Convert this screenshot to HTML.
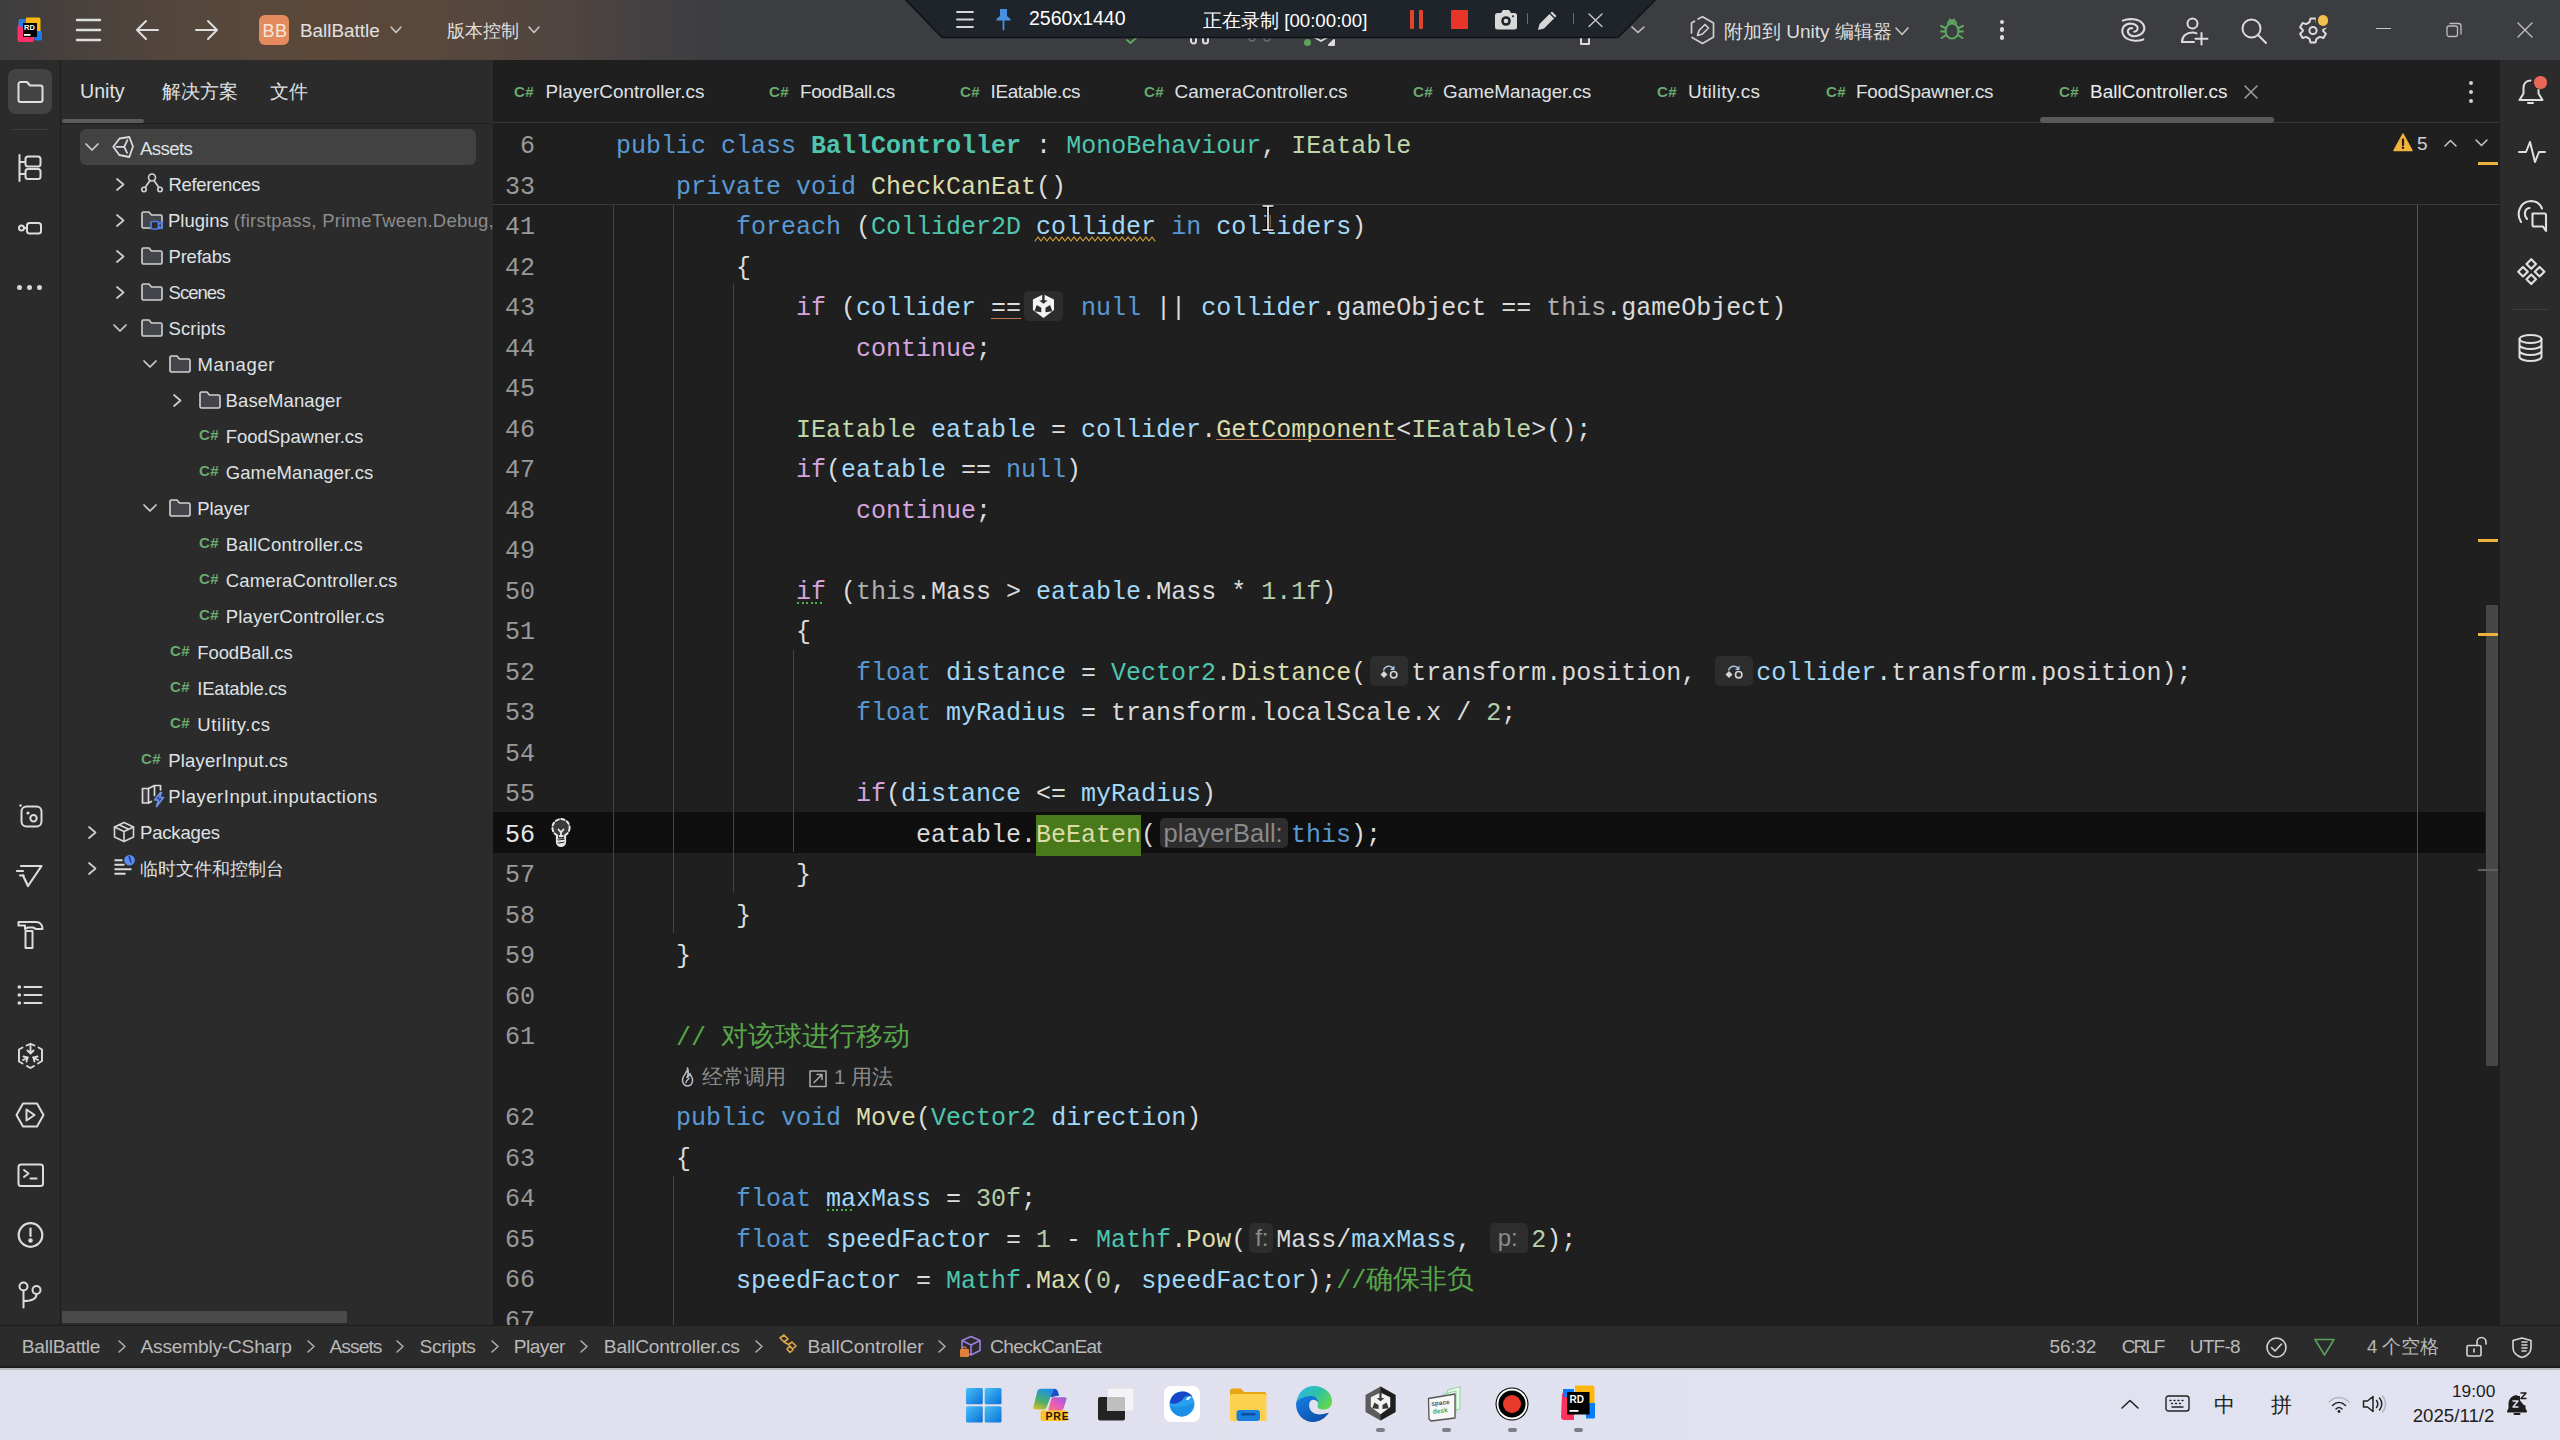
<!DOCTYPE html><html><head><meta charset="utf-8"><style>
*{box-sizing:border-box}
html,body{margin:0;padding:0}
body{width:2560px;height:1440px;overflow:hidden;position:relative;background:#1f1f1f;font-family:"Liberation Sans",sans-serif;color:#dfe1e5}
.a{position:absolute}
svg.i{position:absolute;overflow:visible;fill:none;stroke:#dcdcdc;stroke-width:2;stroke-linecap:round;stroke-linejoin:round}
.t{position:absolute;white-space:nowrap;line-height:1}
.code{position:absolute;font-family:"Liberation Mono",monospace;font-size:25px;white-space:pre;line-height:40.5px;color:#dcdcdc}
.kw{color:#5999d3}.ct{color:#d6a4dd}.ty{color:#4ec6ae}.it{color:#bed6aa}.fn{color:#dcdcaa}
.id{color:#a2d8f8}.nm{color:#b5cea8}.cm{color:#57a64a}.th{color:#b0b0b0}.mb{color:#dadada}
.ln{position:absolute;font-family:"Liberation Mono",monospace;font-size:25px;line-height:40.5px;color:#999999;text-align:right;width:80px;white-space:pre}
.cs{position:absolute;font-family:"Liberation Sans",sans-serif;font-weight:bold;font-size:14.8px;line-height:1;color:#6aa970;white-space:nowrap;transform:scaleX(1.02);transform-origin:0 0;letter-spacing:0.3px}
.chip{display:inline-block;position:relative;vertical-align:top;height:40.5px}
.chip i{position:absolute;top:2px;height:30px;background:#2d2d2d;border-radius:5px;font-style:normal;font-family:"Liberation Sans",sans-serif;color:#8a8a8a;white-space:nowrap}
</style></head><body>
<div class="a" style="left:0px;top:0px;width:2560px;height:60px;background:#3c3d40;"></div>
<div class="a" style="left:0px;top:0px;width:800px;height:60px;background:linear-gradient(90deg,#3e3d3e 0px,#4a423e 90px,#56473c 200px,#5b4839 320px,#58473b 440px,#504541 560px,#464141 630px,#3d3e41 710px,#3c3d40 800px);"></div>
<svg class="i" style="left:12px;top:12px;width:36px;height:36px;stroke:none" viewBox="0 0 36 36"><rect x="5.5" y="12.5" width="16.5" height="17.5" rx="2.5" fill="#ff2f6c"/><rect x="6.5" y="7" width="8" height="8" rx="2" fill="#3279dc"/><path d="M14 5.5H26.5Q28.5 5.5 28.5 7.5V20H14Z" fill="#fdb60d"/><rect x="22.5" y="19" width="7.5" height="9.5" rx="1.5" fill="#1a78f0"/><rect x="11" y="11" width="14" height="14" fill="#000"/><text x="12.1" y="18.3" font-family="Liberation Sans" font-weight="bold" font-size="7.4" fill="#fff" stroke="none">RD</text><rect x="12" y="22" width="6.5" height="1.8" fill="#fff"/></svg>
<svg class="i" style="left:76px;top:18px;width:25px;height:24px;stroke:#dedede;stroke-width:2.4" viewBox="0 0 25 24"><path d="M1 2H24M1 12H24M1 22H24"/></svg>
<svg class="i" style="left:135px;top:19px;width:24px;height:22px;stroke:#dedede" viewBox="0 0 24 22"><path d="M23 11H2M11 2L2 11L11 20"/></svg>
<svg class="i" style="left:195px;top:19px;width:24px;height:22px;stroke:#dedede" viewBox="0 0 24 22"><path d="M1 11H22M13 2L22 11L13 20"/></svg>
<div class="a" style="left:259px;top:15px;width:30px;height:30px;background:#e38b5d;border-radius:6px"></div>
<div class="t" style="left:262.5px;top:21.96px;font-size:18px;color:#f7e6da;letter-spacing:0.5px">BB</div>
<div class="t" style="left:300px;top:21.50px;font-size:18.9px;color:#e0e0e0;letter-spacing:-0.017px;">BallBattle</div>
<svg class="i" style="left:390px;top:26px;width:12px;height:8px;stroke:#c8c8c8;stroke-width:1.6" viewBox="0 0 12 8"><path d="M1 1L6 6.5L11 1"/></svg>
<div class="t" style="left:447px;top:22.26px;font-size:18px;color:#e0e0e0;">版本控制</div>
<svg class="i" style="left:528px;top:26px;width:12px;height:8px;stroke:#c8c8c8;stroke-width:1.6" viewBox="0 0 12 8"><path d="M1 1L6 6.5L11 1"/></svg>
<svg class="i" style="left:1689px;top:16px;width:27px;height:30px;stroke:#cfcfcf;stroke-width:1.7" viewBox="0 0 27 30"><path d="M9 3L13.5 0.8L24.5 7V21L13.5 27.5L3 21.5M2.5 17V7L5.5 5.2"/><path d="M8.5 19.5L10 14.5L16 8.5L19.5 12L13.5 18L8.5 19.5Z"/></svg>
<div class="t" style="left:1724px;top:22.22px;font-size:19px;color:#dedede;">附加到 Unity 编辑器</div>
<svg class="i" style="left:1895px;top:27px;width:14px;height:9px;stroke:#c8c8c8;stroke-width:1.6" viewBox="0 0 14 9"><path d="M1 1L7 7.5L13 1"/></svg>
<svg class="i" style="left:1940px;top:18px;width:24px;height:22px;stroke:#5faa5f;stroke-width:2" viewBox="0 0 24 22"><path d="M8 5.5a4 3 0 0 1 8 0"/><path d="M10 1.5L11 4M14 1.5L13 4"/><ellipse cx="12" cy="13" rx="6.5" ry="7.5"/><path d="M1 8L5.5 10M23 8L18.5 10M1 13.5H5.5M23 13.5H18.5M1.5 20L5.5 17.5M22.5 20L18.5 17.5"/></svg>
<div class="a" style="left:1999.6px;top:19.5px;width:4.8px;height:4.8px;background:#dcdcdc;border-radius:50%"></div>
<div class="a" style="left:1999.6px;top:27.3px;width:4.8px;height:4.8px;background:#dcdcdc;border-radius:50%"></div>
<div class="a" style="left:1999.6px;top:35.1px;width:4.8px;height:4.8px;background:#dcdcdc;border-radius:50%"></div>
<svg class="i" style="left:2110px;top:10px;width:50px;height:40px;stroke:#dcdcdc;stroke-width:2.1" viewBox="0 0 50 40"><path d="M12.8 10.6C18 8.5 29 8 33 14C36 19 33.5 24 27.5 25.8C22.5 27.2 18 25 17.8 21.5C17.6 19 20 17.8 22.2 18.3"/><path d="M33.3 29.4C28 31.5 18 31.5 14 26C11 22 12 17 15.5 15C19 13 25 13 27.2 16.5C28.5 19 27 21.5 24.2 21.7"/></svg>
<svg class="i" style="left:2181px;top:17px;width:28px;height:28px;stroke:#dcdcdc;stroke-width:2" viewBox="0 0 28 28"><circle cx="11.5" cy="6.5" r="5"/><path d="M1 25C1 19 5.5 15.5 11.5 15.5C13 15.5 14.3 15.8 15.5 16.3"/><path d="M1 25H13M20.5 16V27.5M14.5 21.8H26.5"/></svg>
<svg class="i" style="left:2241px;top:18px;width:26px;height:26px;stroke:#dcdcdc;stroke-width:2" viewBox="0 0 26 26"><circle cx="10.5" cy="10.5" r="9"/><path d="M17 17L25 25"/></svg>
<svg class="i" style="left:2300px;top:16px;width:26px;height:28px;stroke:none" viewBox="0 0 26 28"><path d="M10 2.5L16 2.5L17 6L20.5 8L24 7L27 12.5L24.5 15L24.5 17.5L24 15M13 2.5"/></svg>
<svg class="i" style="left:2300px;top:17px;width:26px;height:27px;stroke:#dcdcdc;stroke-width:2" viewBox="0 0 26 27"><path d="M10.5 1.5H15.5L16.5 5.2L19.8 7.1L23.4 6L25.9 10.3L23.2 13V14.1L25.9 16.7L23.4 21L19.8 19.9L16.5 21.8L15.5 25.5H10.5L9.5 21.8L6.2 19.9L2.6 21L0.1 16.7L2.8 14.1V13L0.1 10.3L2.6 6L6.2 7.1L9.5 5.2Z"/><circle cx="13" cy="13.5" r="3.6"/></svg>
<div class="a" style="left:2317.5px;top:14.8px;width:10.8px;height:10.8px;background:#f2c14e;border-radius:50%;box-shadow:0 0 0 2.5px #3c3d40"></div>
<div class="a" style="left:2376px;top:28.2px;width:15px;height:1.2px;background:#c4c4c4;"></div>
<svg class="i" style="left:2446px;top:22px;width:16px;height:15px;stroke:#bdbdbd;stroke-width:1.3" viewBox="0 0 16 15"><rect x="1" y="4" width="10.5" height="10.5" rx="2"/><path d="M4 1.5H12.5A2.5 2.5 0 0 1 15 4V12"/></svg>
<svg class="i" style="left:2517px;top:22px;width:16px;height:15px;stroke:#bdbdbd;stroke-width:1.4" viewBox="0 0 16 15"><path d="M1 1L15 15M15 1L1 15"/></svg>
<svg class="i" style="left:1126px;top:36px;width:12px;height:8px;stroke:#5faa5f;stroke-width:1.8" viewBox="0 0 12 8"><path d="M1 4L4.5 7L11 1"/></svg>
<svg class="i" style="left:1189px;top:36px;width:22px;height:8px;stroke:#dcdcdc;stroke-width:2" viewBox="0 0 22 8"><path d="M2 1V5A2 2 0 0 0 7 5V1M14 1V5A2 2 0 0 0 19 5V1"/></svg>
<svg class="i" style="left:1248px;top:36px;width:24px;height:8px;stroke:#6a6a6a;stroke-width:1.5" viewBox="0 0 24 8"><path d="M1 2A3 3 0 0 0 7 2M16 2A3 3 0 0 0 22 2"/></svg>
<div class="a" style="left:1304px;top:39px;width:7px;height:7px;background:#5fa35f;border-radius:50%"></div>
<svg class="i" style="left:1313px;top:36px;width:22px;height:10px;stroke:#dcdcdc;stroke-width:2" viewBox="0 0 22 10"><path d="M1 1L8 5L15 1"/><path d="M16 9L21 4V9Z" fill="#dcdcdc"/></svg>
<svg class="i" style="left:1580px;top:37px;width:10px;height:9px;stroke:#dcdcdc;stroke-width:2" viewBox="0 0 10 9"><path d="M1 0V7H9V0"/></svg>
<svg class="i" style="left:1631px;top:26px;width:14px;height:8px;stroke:#c8c8c8;stroke-width:1.6" viewBox="0 0 14 8"><path d="M1 1L7 6.5L13 1"/></svg>
<svg class="i" style="left:904px;top:-1px;width:753px;height:40px;stroke:none" viewBox="0 0 753 40"><path d="M1 0H752L714 38.5H38Z" fill="#1f242b" stroke="#0f1216" stroke-width="1.5"/></svg>
<svg class="i" style="left:956px;top:11px;width:18px;height:17px;stroke:#d6d6d6;stroke-width:1.8" viewBox="0 0 18 17"><path d="M1 1H17M1 8.5H17M1 16H17"/></svg>
<svg class="i" style="left:995px;top:8px;width:18px;height:22px;stroke:none" viewBox="0 0 18 22"><path d="M5 1H12V8L15.5 11V12.5H1.5V11L5 8Z" fill="#4a90e2" stroke="none"/><path d="M8.5 12.5V21.5" stroke="#4a90e2" stroke-width="1.8"/></svg>
<div class="t" style="left:1029px;top:8.69px;font-size:19.5px;color:#ffffff;">2560x1440</div>
<div class="t" style="left:1203px;top:11.67px;font-size:18.7px;color:#ffffff;">正在录制 [00:00:00]</div>
<div class="a" style="left:1409.5px;top:10.2px;width:4.6px;height:18.7px;background:#e0442e;border-radius:1px"></div>
<div class="a" style="left:1418.8px;top:10.2px;width:4.6px;height:18.7px;background:#e0442e;border-radius:1px"></div>
<div class="a" style="left:1451px;top:10px;width:17.3px;height:19px;background:#e8352a;border-radius:1px"></div>
<svg class="i" style="left:1494px;top:9px;width:24px;height:21px;stroke:none" viewBox="0 0 24 21"><path d="M1 6.5A2.5 2.5 0 0 1 3.5 4H7L9 1H15L17 4H20.5A2.5 2.5 0 0 1 23 6.5V18A2.5 2.5 0 0 1 20.5 20.5H3.5A2.5 2.5 0 0 1 1 18Z" fill="#d8d8d8" stroke="none"/><circle cx="12" cy="12" r="4.8" fill="#1f242b"/><circle cx="12" cy="12" r="2.3" fill="#d8d8d8"/><circle cx="19" cy="7.3" r="1" fill="#1f242b"/></svg>
<div class="a" style="left:1526.5px;top:13px;width:1.3px;height:11px;background:#6a6d72;"></div>
<svg class="i" style="left:1537px;top:9px;width:22px;height:22px;stroke:none" viewBox="0 0 22 22"><path d="M2.5 15L15 2.5L19.5 7L7 19.5L1 21Z" fill="#d8d8d8" stroke="none"/><path d="M13 4.5L17.5 9" stroke="#1f242b" stroke-width="1.3"/></svg>
<div class="a" style="left:1573px;top:13px;width:1.3px;height:11px;background:#6a6d72;"></div>
<svg class="i" style="left:1587.5px;top:12.5px;width:15px;height:14.5px;stroke:#c6c6c6;stroke-width:1.4" viewBox="0 0 15 14.5"><path d="M1 1L14 13.5M14 1L1 13.5"/></svg>
<div class="a" style="left:0px;top:60px;width:60px;height:1265px;background:#2b2b2b;"></div>
<div class="a" style="left:60px;top:60px;width:1px;height:1265px;background:#1e1e1e;"></div>
<div class="a" style="left:7.6px;top:69px;width:44.7px;height:44.8px;background:#434343;border-radius:8px"></div>
<svg class="i" style="left:16.5px;top:81px;width:27px;height:22px;stroke:#e0e0e0;stroke-width:2" viewBox="0 0 27 22"><path d="M1.5 3A2 2 0 0 1 3.5 1H10L13 4.5H23.5A2 2 0 0 1 25.5 6.5V19A2 2 0 0 1 23.5 21H3.5A2 2 0 0 1 1.5 19Z"/></svg>
<div class="a" style="left:12px;top:129px;width:36px;height:1px;background:#3d3d3d;"></div>
<svg class="i" style="left:18px;top:154px;width:24px;height:28px;stroke:#dcdcdc;stroke-width:2" viewBox="0 0 24 28"><path d="M1.5 1V27M1.5 8H6.5M1.5 20H6.5"/><rect x="7.5" y="2.5" width="15" height="10" rx="2.5"/><rect x="7.5" y="15" width="15" height="10" rx="2.5"/></svg>
<svg class="i" style="left:18px;top:222px;width:24px;height:12px;stroke:#dcdcdc;stroke-width:2" viewBox="0 0 24 12"><circle cx="3.5" cy="6" r="2.5"/><path d="M6 6H9"/><rect x="9" y="1" width="14" height="10.5" rx="2.5"/></svg>
<div class="a" style="left:17.4px;top:285.3px;width:5px;height:5px;background:#d6d6d6;border-radius:50%"></div>
<div class="a" style="left:27.3px;top:285.3px;width:5px;height:5px;background:#d6d6d6;border-radius:50%"></div>
<div class="a" style="left:37.2px;top:285.3px;width:5px;height:5px;background:#d6d6d6;border-radius:50%"></div>
<svg class="i" style="left:19px;top:804px;width:24px;height:24px;stroke:#dcdcdc;stroke-width:2" viewBox="0 0 24 24"><circle cx="1.5" cy="1.5" r="1.2" fill="#dcdcdc" stroke="none"/><rect x="2.5" y="2.5" width="20" height="20" rx="5"/><circle cx="9" cy="9" r="1.6" fill="#dcdcdc" stroke="none"/><circle cx="14.5" cy="14.2" r="3.2"/></svg>
<svg class="i" style="left:15px;top:864px;width:29px;height:24px;stroke:#dcdcdc;stroke-width:2.2" viewBox="0 0 29 24"><path d="M6 2H26.5L13 22L8 11.5"/><path d="M2 7H8M5 11.5H8.5"/></svg>
<svg class="i" style="left:17px;top:920px;width:27px;height:30px;stroke:#dcdcdc;stroke-width:2" viewBox="0 0 27 30"><path d="M1.5 2H19C23 2 25.5 5 25.5 9H19L16 7.5H11L8 9V5.5H1.5Z"/><path d="M8.5 11H15.5V28H8.5Z"/></svg>
<svg class="i" style="left:17px;top:984px;width:26px;height:22px;stroke:#dcdcdc;stroke-width:2" viewBox="0 0 26 22"><circle cx="2.3" cy="3" r="1.8" fill="#dcdcdc" stroke="none"/><circle cx="2.3" cy="11" r="1.8" fill="#dcdcdc" stroke="none"/><circle cx="2.3" cy="19" r="1.8" fill="#dcdcdc" stroke="none"/><path d="M7.5 3H24.5M7.5 11H24.5M7.5 19H24.5"/></svg>
<svg class="i" style="left:18px;top:1043px;width:25px;height:26px;stroke:#dcdcdc;stroke-width:1.9" viewBox="0 0 25 26"><path d="M8.5 2.5L12.5 0.8L16.5 2.5M20.5 4.5L24 6.5V18L20 20.5M16 23L12.5 25L9 23M4.5 20.5L1 18.5V6.5L4.5 4.5"/><path d="M12.5 3V10M9.5 7.5L12.5 10.5L15.5 7.5M5 17L10 14.5M5.5 13.5L9.5 14.5L8.5 18.5M20 17L15 14.5M19.5 13.5L15.5 14.5L16.5 18.5"/></svg>
<svg class="i" style="left:15px;top:1102px;width:30px;height:26px;stroke:#dcdcdc;stroke-width:2" viewBox="0 0 30 26"><path d="M8 1.5H22L28.5 13L22 24.5H8L1.5 13Z"/><path d="M11.5 7.5L19.5 13L11.5 18.5Z"/></svg>
<svg class="i" style="left:17px;top:1163px;width:27px;height:25px;stroke:#dcdcdc;stroke-width:2" viewBox="0 0 27 25"><rect x="1.5" y="1.5" width="24.5" height="21.5" rx="2.5"/><path d="M7 7L11.5 10.5L7 14M13.5 15.5H19.5"/></svg>
<svg class="i" style="left:17px;top:1221px;width:27px;height:28px;stroke:#dcdcdc;stroke-width:2.2" viewBox="0 0 27 28"><circle cx="13.5" cy="14" r="11.8"/><path d="M13.5 7.5V15"/><circle cx="13.5" cy="19.5" r="1.2" fill="#dcdcdc"/></svg>
<svg class="i" style="left:18px;top:1281px;width:25px;height:28px;stroke:#dcdcdc;stroke-width:2" viewBox="0 0 25 28"><circle cx="5.5" cy="5.5" r="4"/><circle cx="18.5" cy="9" r="4"/><path d="M5.5 9.5V26.5M5.5 20C12 20 18.5 19 18.5 13"/></svg>
<div class="a" style="left:61px;top:60px;width:432px;height:1265px;background:#2b2b2b;"></div>
<div class="a" style="left:493px;top:60px;width:1px;height:1265px;background:#1e1e1e;"></div>
<div class="t" style="left:80px;top:82.31px;font-size:19.6px;color:#dfe1e5;">Unity</div>
<div class="t" style="left:162px;top:83.34px;font-size:18.5px;color:#dfe1e5;">解决方案</div>
<div class="t" style="left:270px;top:83.34px;font-size:18.5px;color:#dfe1e5;">文件</div>
<div class="a" style="left:62px;top:118.7px;width:82px;height:4px;background:#5c5c5c;border-radius:2px"></div>
<div class="a" style="left:61px;top:122.5px;width:431px;height:1px;background:#1f1f1f;"></div>
<div class="a" style="left:79.8px;top:129.4px;width:396px;height:35.5px;background:#424242;border-radius:6px"></div>
<svg class="i" style="left:85px;top:142.5px;width:14px;height:9px;stroke:#cfcfcf;stroke-width:1.7" viewBox="0 0 14 9"><path d="M1 1L7 7L13 1"/></svg>
<svg class="i" style="left:105px;top:130px;width:35px;height:35px;stroke:#dadada;stroke-width:1.8" viewBox="0 0 35 35"><path d="M8.3 16.8L14.6 8.5L24.3 7L28 16.5L24.3 27L14.3 25Z" fill="#3a3c41"/><path d="M11.4 16.8H19.2L22.4 10.2M19.2 16.8L22.1 22.8"/></svg>
<div class="t" style="left:140px;top:139.57px;font-size:18.7px;color:#dfe1e5;letter-spacing:-0.624px;">Assets</div>
<svg class="i" style="left:115.5px;top:177.5px;width:9px;height:13px;stroke:#cfcfcf;stroke-width:1.7" viewBox="0 0 9 13"><path d="M1 1L7.5 6.5L1 12"/></svg>
<svg class="i" style="left:141px;top:173px;width:22px;height:20px;stroke:#d6d6d6;stroke-width:1.6" viewBox="0 0 22 20"><circle cx="11" cy="4.5" r="3.5"/><circle cx="3" cy="16.5" r="2.2"/><circle cx="19" cy="16.5" r="2.2"/><path d="M9 7.5L4.2 14.5M13 7.5L17.8 14.5"/></svg>
<div class="t" style="left:168.5px;top:175.74px;font-size:18.5px;color:#dfe1e5;letter-spacing:-0.323px;">References</div>
<svg class="i" style="left:115.5px;top:213.5px;width:9px;height:13px;stroke:#cfcfcf;stroke-width:1.7" viewBox="0 0 9 13"><path d="M1 1L7.5 6.5L1 12"/></svg>
<svg class="i" style="left:141px;top:210.5px;width:22px;height:18px;stroke:#d2d2d2;stroke-width:1.6" viewBox="0 0 22 18"><path d="M1 2.5A1.5 1.5 0 0 1 2.5 1H8L10.5 4H19.5A1.5 1.5 0 0 1 21 5.5V15.5A1.5 1.5 0 0 1 19.5 17H2.5A1.5 1.5 0 0 1 1 15.5Z" fill="#43454a"/></svg>
<svg class="i" style="left:150px;top:219px;width:13px;height:11px;stroke:#4f7fe6;stroke-width:1.7" viewBox="0 0 13 11"><rect x="1" y="2.5" width="7.5" height="7.5" rx="1.3" fill="#2b2b2b"/><path d="M8.5 4.5L12 3V9.5L8.5 8"/></svg>
<div class="t" style="left:168px;top:211.74px;font-size:18.5px;color:#dfe1e5;">Plugins <span style="color:#8c8c8c;letter-spacing:0.25px">(firstpass, PrimeTween.Debug,</span></div>
<svg class="i" style="left:115.5px;top:249.5px;width:9px;height:13px;stroke:#cfcfcf;stroke-width:1.7" viewBox="0 0 9 13"><path d="M1 1L7.5 6.5L1 12"/></svg>
<svg class="i" style="left:141px;top:247px;width:22px;height:18px;stroke:#d2d2d2;stroke-width:1.6" viewBox="0 0 22 18"><path d="M1 2.5A1.5 1.5 0 0 1 2.5 1H8L10.5 4H19.5A1.5 1.5 0 0 1 21 5.5V15.5A1.5 1.5 0 0 1 19.5 17H2.5A1.5 1.5 0 0 1 1 15.5Z" fill="#43454a"/></svg>
<div class="t" style="left:168.5px;top:247.74px;font-size:18.5px;color:#dfe1e5;letter-spacing:-0.209px;">Prefabs</div>
<svg class="i" style="left:115.5px;top:285.5px;width:9px;height:13px;stroke:#cfcfcf;stroke-width:1.7" viewBox="0 0 9 13"><path d="M1 1L7.5 6.5L1 12"/></svg>
<svg class="i" style="left:141px;top:283px;width:22px;height:18px;stroke:#d2d2d2;stroke-width:1.6" viewBox="0 0 22 18"><path d="M1 2.5A1.5 1.5 0 0 1 2.5 1H8L10.5 4H19.5A1.5 1.5 0 0 1 21 5.5V15.5A1.5 1.5 0 0 1 19.5 17H2.5A1.5 1.5 0 0 1 1 15.5Z" fill="#43454a"/></svg>
<div class="t" style="left:168.5px;top:283.74px;font-size:18.5px;color:#dfe1e5;letter-spacing:-0.959px;">Scenes</div>
<svg class="i" style="left:113px;top:323.5px;width:14px;height:9px;stroke:#cfcfcf;stroke-width:1.7" viewBox="0 0 14 9"><path d="M1 1L7 7L13 1"/></svg>
<svg class="i" style="left:141px;top:319px;width:22px;height:18px;stroke:#d2d2d2;stroke-width:1.6" viewBox="0 0 22 18"><path d="M1 2.5A1.5 1.5 0 0 1 2.5 1H8L10.5 4H19.5A1.5 1.5 0 0 1 21 5.5V15.5A1.5 1.5 0 0 1 19.5 17H2.5A1.5 1.5 0 0 1 1 15.5Z" fill="#43454a"/></svg>
<div class="t" style="left:168.5px;top:319.74px;font-size:18.5px;color:#dfe1e5;letter-spacing:0.061px;">Scripts</div>
<svg class="i" style="left:143px;top:359.5px;width:14px;height:9px;stroke:#cfcfcf;stroke-width:1.7" viewBox="0 0 14 9"><path d="M1 1L7 7L13 1"/></svg>
<svg class="i" style="left:169px;top:355px;width:22px;height:18px;stroke:#d2d2d2;stroke-width:1.6" viewBox="0 0 22 18"><path d="M1 2.5A1.5 1.5 0 0 1 2.5 1H8L10.5 4H19.5A1.5 1.5 0 0 1 21 5.5V15.5A1.5 1.5 0 0 1 19.5 17H2.5A1.5 1.5 0 0 1 1 15.5Z" fill="#43454a"/></svg>
<div class="t" style="left:197.5px;top:355.74px;font-size:18.5px;color:#dfe1e5;letter-spacing:0.663px;">Manager</div>
<svg class="i" style="left:172.5px;top:393.5px;width:9px;height:13px;stroke:#cfcfcf;stroke-width:1.7" viewBox="0 0 9 13"><path d="M1 1L7.5 6.5L1 12"/></svg>
<svg class="i" style="left:198.5px;top:391px;width:22px;height:18px;stroke:#d2d2d2;stroke-width:1.6" viewBox="0 0 22 18"><path d="M1 2.5A1.5 1.5 0 0 1 2.5 1H8L10.5 4H19.5A1.5 1.5 0 0 1 21 5.5V15.5A1.5 1.5 0 0 1 19.5 17H2.5A1.5 1.5 0 0 1 1 15.5Z" fill="#43454a"/></svg>
<div class="t" style="left:225.6px;top:391.74px;font-size:18.5px;color:#dfe1e5;letter-spacing:0.082px;">BaseManager</div>
<div class="cs" style="left:198.5px;top:428.20px">C#</div>
<div class="t" style="left:225.7px;top:427.74px;font-size:18.5px;color:#dfe1e5;letter-spacing:-0.016px;">FoodSpawner.cs</div>
<div class="cs" style="left:198.5px;top:464.20px">C#</div>
<div class="t" style="left:225.7px;top:463.74px;font-size:18.5px;color:#dfe1e5;letter-spacing:0.121px;">GameManager.cs</div>
<svg class="i" style="left:143px;top:503.5px;width:14px;height:9px;stroke:#cfcfcf;stroke-width:1.7" viewBox="0 0 14 9"><path d="M1 1L7 7L13 1"/></svg>
<svg class="i" style="left:169px;top:499px;width:22px;height:18px;stroke:#d2d2d2;stroke-width:1.6" viewBox="0 0 22 18"><path d="M1 2.5A1.5 1.5 0 0 1 2.5 1H8L10.5 4H19.5A1.5 1.5 0 0 1 21 5.5V15.5A1.5 1.5 0 0 1 19.5 17H2.5A1.5 1.5 0 0 1 1 15.5Z" fill="#43454a"/></svg>
<div class="t" style="left:197.3px;top:499.74px;font-size:18.5px;color:#dfe1e5;letter-spacing:-0.089px;">Player</div>
<div class="cs" style="left:198.5px;top:536.20px">C#</div>
<div class="t" style="left:225.7px;top:535.74px;font-size:18.5px;color:#dfe1e5;letter-spacing:0.209px;">BallController.cs</div>
<div class="cs" style="left:198.5px;top:572.20px">C#</div>
<div class="t" style="left:225.7px;top:571.74px;font-size:18.5px;color:#dfe1e5;letter-spacing:0.166px;">CameraController.cs</div>
<div class="cs" style="left:198.5px;top:608.20px">C#</div>
<div class="t" style="left:225.7px;top:607.74px;font-size:18.5px;color:#dfe1e5;letter-spacing:0.186px;">PlayerController.cs</div>
<div class="cs" style="left:169.5px;top:644.20px">C#</div>
<div class="t" style="left:197.3px;top:643.74px;font-size:18.5px;color:#dfe1e5;letter-spacing:-0.126px;">FoodBall.cs</div>
<div class="cs" style="left:169.5px;top:680.20px">C#</div>
<div class="t" style="left:197.3px;top:679.74px;font-size:18.5px;color:#dfe1e5;letter-spacing:-0.212px;">IEatable.cs</div>
<div class="cs" style="left:169.5px;top:716.20px">C#</div>
<div class="t" style="left:197.3px;top:715.74px;font-size:18.5px;color:#dfe1e5;letter-spacing:0.579px;">Utility.cs</div>
<div class="cs" style="left:141px;top:752.20px">C#</div>
<div class="t" style="left:168.3px;top:751.74px;font-size:18.5px;color:#dfe1e5;letter-spacing:0.168px;">PlayerInput.cs</div>
<svg class="i" style="left:135px;top:775px;width:40px;height:40px;stroke:#dcdcdc;stroke-width:1.7" viewBox="0 0 40 40"><path d="M7.5 13.5H13.5V28H7.5Z" fill="#3c3e42"/><path d="M13.5 13.5L19.5 10.5H25.5V15M19.5 10.5V20.5M13.5 28L16.5 26.5"/></svg>
<svg class="i" style="left:135px;top:775px;width:40px;height:40px;stroke:#6f93e6;stroke-width:1.6" viewBox="0 0 40 40"><path d="M25.5 17.5L19.5 25H23.5L21.5 31.5L28.5 22.5H24.5L26.5 17.5Z" fill="#1f3f9a"/></svg>
<div class="t" style="left:168.3px;top:787.74px;font-size:18.5px;color:#dfe1e5;letter-spacing:0.502px;">PlayerInput.inputactions</div>
<svg class="i" style="left:88px;top:825.5px;width:9px;height:13px;stroke:#cfcfcf;stroke-width:1.7" viewBox="0 0 9 13"><path d="M1 1L7.5 6.5L1 12"/></svg>
<svg class="i" style="left:113px;top:821px;width:22px;height:22px;stroke:#d6d6d6;stroke-width:1.6" viewBox="0 0 22 22"><path d="M11 1.5L20.5 6V16L11 20.5L1.5 16V6Z"/><path d="M1.5 6L11 10.5L20.5 6M11 10.5V20.5M6 3.8L15.8 8.3"/></svg>
<div class="t" style="left:140px;top:823.74px;font-size:18.5px;color:#dfe1e5;letter-spacing:-0.179px;">Packages</div>
<svg class="i" style="left:88px;top:861.5px;width:9px;height:13px;stroke:#cfcfcf;stroke-width:1.7" viewBox="0 0 9 13"><path d="M1 1L7.5 6.5L1 12"/></svg>
<svg class="i" style="left:105px;top:848px;width:40px;height:40px;stroke:#dcdcdc;stroke-width:1.9;stroke-linecap:butt" viewBox="0 0 40 40"><path d="M9.5 12.2H17.5M9.5 16.8H19.5M9.5 21.2H26.5M9.5 25.8H20.5"/></svg>
<div class="a" style="left:119px;top:848px;width:0px;height:0px;background:none;"></div>
<svg class="i" style="left:105px;top:848px;width:40px;height:40px;stroke:none" viewBox="0 0 40 40"><circle cx="24.5" cy="12.2" r="5.3" fill="#5b8def"/><path d="M24.2 8.8L26 14" stroke="#0d3aa0" stroke-width="1.6"/></svg>
<div class="t" style="left:140px;top:859.91px;font-size:18.3px;color:#dfe1e5;">临时文件和控制台</div>
<div class="a" style="left:62px;top:1311px;width:285px;height:12px;background:#4a4a4a;border-radius:1px"></div>
<div class="a" style="left:494px;top:60px;width:2006px;height:1265px;background:#1f1f1f;"></div>
<div class="a" style="left:493px;top:122px;width:2007px;height:1px;background:#383838;"></div>
<div class="cs" style="left:514px;top:85.10px">C#</div>
<div class="t" style="left:545.5px;top:83.00px;font-size:18.9px;color:#dfe1e5;letter-spacing:0.027px;">PlayerController.cs</div>
<div class="cs" style="left:769px;top:85.10px">C#</div>
<div class="t" style="left:800px;top:83.00px;font-size:18.9px;color:#dfe1e5;letter-spacing:-0.355px;">FoodBall.cs</div>
<div class="cs" style="left:960px;top:85.10px">C#</div>
<div class="t" style="left:990.5px;top:83.00px;font-size:18.9px;color:#dfe1e5;letter-spacing:-0.350px;">IEatable.cs</div>
<div class="cs" style="left:1144px;top:85.10px">C#</div>
<div class="t" style="left:1174.5px;top:83.00px;font-size:18.9px;color:#dfe1e5;letter-spacing:0.041px;">CameraController.cs</div>
<div class="cs" style="left:1413px;top:85.10px">C#</div>
<div class="t" style="left:1443px;top:83.00px;font-size:18.9px;color:#dfe1e5;letter-spacing:-0.060px;">GameManager.cs</div>
<div class="cs" style="left:1657px;top:85.10px">C#</div>
<div class="t" style="left:1688px;top:83.00px;font-size:18.9px;color:#dfe1e5;letter-spacing:0.339px;">Utility.cs</div>
<div class="cs" style="left:1826px;top:85.10px">C#</div>
<div class="t" style="left:1856px;top:83.00px;font-size:18.9px;color:#dfe1e5;letter-spacing:-0.245px;">FoodSpawner.cs</div>
<div class="cs" style="left:2059px;top:85.10px">C#</div>
<div class="t" style="left:2090px;top:83.00px;font-size:18.9px;color:#ececec;letter-spacing:0.065px;">BallController.cs</div>
<svg class="i" style="left:2244px;top:85px;width:14px;height:14px;stroke:#9a9a9a;stroke-width:1.6" viewBox="0 0 14 14"><path d="M1 1L13 13M13 1L1 13"/></svg>
<div class="a" style="left:2039.7px;top:117px;width:234.5px;height:5.5px;background:#5a5a5a;border-radius:3px"></div>
<div class="a" style="left:2468.8px;top:80.8px;width:4.4px;height:4.4px;background:#d0d0d0;border-radius:50%"></div>
<div class="a" style="left:2468.8px;top:89.8px;width:4.4px;height:4.4px;background:#d0d0d0;border-radius:50%"></div>
<div class="a" style="left:2468.8px;top:98.8px;width:4.4px;height:4.4px;background:#d0d0d0;border-radius:50%"></div>
<div class="a" style="left:493px;top:123px;width:2007px;height:1202px;overflow:hidden">
<div class="a" style="left:0px;top:688.5px;width:1992px;height:41px;background:#0f0f0f;"></div>
<div class="a" style="left:120px;top:82px;width:1px;height:1120px;background:#444444;"></div>
<div class="a" style="left:180px;top:82px;width:1px;height:728px;background:#444444;"></div>
<div class="a" style="left:240px;top:161px;width:1px;height:608px;background:#444444;"></div>
<div class="a" style="left:300px;top:527px;width:1px;height:202px;background:#444444;"></div>
<div class="a" style="left:180px;top:1053px;width:1px;height:149px;background:#444444;"></div>
<div class="a" style="left:1924px;top:82px;width:1px;height:1120px;background:#555555;"></div>
<div class="ln" style="left:-38px;top:4.30px;">6</div>
<div class="ln" style="left:-38px;top:44.80px;">33</div>
<div class="ln" style="left:-38px;top:85.30px;">41</div>
<div class="ln" style="left:-38px;top:125.80px;">42</div>
<div class="ln" style="left:-38px;top:166.30px;">43</div>
<div class="ln" style="left:-38px;top:206.80px;">44</div>
<div class="ln" style="left:-38px;top:287.80px;">46</div>
<div class="ln" style="left:-38px;top:328.30px;">47</div>
<div class="ln" style="left:-38px;top:368.80px;">48</div>
<div class="ln" style="left:-38px;top:449.80px;">50</div>
<div class="ln" style="left:-38px;top:490.30px;">51</div>
<div class="ln" style="left:-38px;top:530.80px;">52</div>
<div class="ln" style="left:-38px;top:571.30px;">53</div>
<div class="ln" style="left:-38px;top:652.30px;">55</div>
<div class="ln" style="left:-38px;top:692.80px;color:#e6e6e6">56</div>
<div class="ln" style="left:-38px;top:733.30px;">57</div>
<div class="ln" style="left:-38px;top:773.80px;">58</div>
<div class="ln" style="left:-38px;top:814.30px;">59</div>
<div class="ln" style="left:-38px;top:895.30px;">61</div>
<div class="ln" style="left:-38px;top:976.30px;">62</div>
<div class="ln" style="left:-38px;top:1016.80px;">63</div>
<div class="ln" style="left:-38px;top:1057.30px;">64</div>
<div class="ln" style="left:-38px;top:1097.80px;">65</div>
<div class="ln" style="left:-38px;top:1138.30px;">66</div>
<div class="ln" style="left:-38px;top:247.30px;">45</div>
<div class="ln" style="left:-38px;top:409.30px;">49</div>
<div class="ln" style="left:-38px;top:611.80px;">54</div>
<div class="ln" style="left:-38px;top:854.80px;">60</div>
<div class="ln" style="left:-38px;top:1178.80px;">67</div>
<div class="code" style="left:123px;top:4.30px"><span class="kw">public</span> <span class="kw">class</span> <span class="ty" style="font-weight:bold">BallController</span> : <span class="ty">MonoBehaviour</span>, <span class="it">IEatable</span></div>
<div class="code" style="left:183px;top:44.80px"><span class="kw">private</span> <span class="kw">void</span> <span class="fn">CheckCanEat</span>()</div>
<div class="code" style="left:243px;top:85.30px"><span class="kw">foreach</span> (<span class="ty">Collider2D</span> <span class="id">collider</span> <span class="kw">in</span> <span class="id">colliders</span>)</div>
<div class="code" style="left:243px;top:125.80px">{</div>
<div class="code" style="left:303px;top:166.30px"><span class="ct">if</span> (<span class="id">collider</span> ==<span class="chip" style="width:45px"><i style="left:3px;width:38.5px;font-size:23px;line-height:30px;padding-left:0px"><svg style="position:absolute;left:0;top:-2px;width:38px;height:33px" viewBox="1024 289 38 33"><path d="M1043.4 294.3L1054 299.5V310L1043.5 318L1032.9 310V299.5Z" fill="#f4f4f4"/><path d="M1042.2 293.5H1044.6V300.3L1047.7 300.5L1043.4 303.7L1039.3 300.5L1042.2 300.3Z" fill="#2d2d2d"/><path d="M1036.7 305L1041.3 307.8V312.3L1034.5 311.3Z M1050.1 305L1045.5 307.8V312.3L1052.3 311.3Z" fill="#2d2d2d"/></svg></i></span> <span class="kw">null</span> || <span class="id">collider</span>.<span class="mb">gameObject</span> == <span class="th">this</span>.<span class="mb">gameObject</span>)</div>
<div class="code" style="left:363px;top:206.80px"><span class="ct">continue</span>;</div>
<div class="code" style="left:303px;top:287.80px"><span class="it">IEatable</span> <span class="id">eatable</span> = <span class="id">collider</span>.<span class="fn">GetComponent</span>&lt;<span class="it">IEatable</span>&gt;();</div>
<div class="code" style="left:303px;top:328.30px"><span class="ct">if</span>(<span class="id">eatable</span> == <span class="kw">null</span>)</div>
<div class="code" style="left:363px;top:368.80px"><span class="ct">continue</span>;</div>
<div class="code" style="left:303px;top:449.80px"><span class="ct">if</span> (<span class="th">this</span>.<span class="mb">Mass</span> &gt; <span class="id">eatable</span>.<span class="mb">Mass</span> * <span class="nm">1.1f</span>)</div>
<div class="code" style="left:303px;top:490.30px">{</div>
<div class="code" style="left:363px;top:530.80px"><span class="kw">float</span> <span class="id">distance</span> = <span class="ty">Vector2</span>.<span class="fn">Distance</span>(<span class="chip" style="width:45px"><i style="left:3.5px;width:38px;font-size:23px;line-height:30px;padding-left:0px"><svg style="position:absolute;left:9px;top:4px;width:22px;height:22px" viewBox="0 0 22 22"><path d="M4.5 10.5C6 5.5 12 5 14.5 8.5" stroke="#a9c3df" stroke-width="1.4" fill="none"/><path d="M15.5 5.5V10H11Z" fill="#a9c3df"/><path d="M5 11L8.5 14.5L5 18L1.5 14.5Z" fill="#d6d6d6"/><circle cx="14.7" cy="14.7" r="3.2" stroke="#d6d6d6" stroke-width="1.6" fill="none"/></svg></i></span><span class="mb">transform</span>.<span class="mb">position</span>, <span class="chip" style="width:45px"><i style="left:4px;width:38px;font-size:23px;line-height:30px;padding-left:0px"><svg style="position:absolute;left:9px;top:4px;width:22px;height:22px" viewBox="0 0 22 22"><path d="M4.5 10.5C6 5.5 12 5 14.5 8.5" stroke="#a9c3df" stroke-width="1.4" fill="none"/><path d="M15.5 5.5V10H11Z" fill="#a9c3df"/><path d="M5 11L8.5 14.5L5 18L1.5 14.5Z" fill="#d6d6d6"/><circle cx="14.7" cy="14.7" r="3.2" stroke="#d6d6d6" stroke-width="1.6" fill="none"/></svg></i></span><span class="id">collider</span>.<span class="mb">transform</span>.<span class="mb">position</span>);</div>
<div class="code" style="left:363px;top:571.30px"><span class="kw">float</span> <span class="id">myRadius</span> = <span class="mb">transform</span>.<span class="mb">localScale</span>.<span class="mb">x</span> / <span class="nm">2</span>;</div>
<div class="code" style="left:363px;top:652.30px"><span class="ct">if</span>(<span class="id">distance</span> &lt;= <span class="id">myRadius</span>)</div>
<div class="code" style="left:423px;top:692.80px"><span class="mb">eatable</span>.<span class="fn" style="background:#487a19;display:inline-block;height:41px;vertical-align:top;margin-top:-1px;line-height:42px">BeEaten</span>(<span class="chip" style="width:135px"><i style="left:3.5px;width:128.5px;font-size:25.5px;line-height:30px;padding-left:4px">playerBall:</i></span><span class="kw">this</span>);</div>
<div class="code" style="left:303px;top:733.30px">}</div>
<div class="code" style="left:243px;top:773.80px">}</div>
<div class="code" style="left:183px;top:814.30px">}</div>
<div class="code" style="left:183px;top:895.30px"><span class="cm">// <span style="font-size:26.7px">对该球进行移动</span></span></div>
<div class="code" style="left:183px;top:976.30px"><span class="kw">public</span> <span class="kw">void</span> <span class="fn">Move</span>(<span class="ty">Vector2</span> <span class="id">direction</span>)</div>
<div class="code" style="left:183px;top:1016.80px">{</div>
<div class="code" style="left:243px;top:1057.30px"><span class="kw">float</span> <span class="id">maxMass</span> = <span class="nm">30f</span>;</div>
<div class="code" style="left:243px;top:1097.80px"><span class="kw">float</span> <span class="id">speedFactor</span> = <span class="nm">1</span> - <span class="ty">Mathf</span>.<span class="fn">Pow</span>(<span class="chip" style="width:30px"><i style="left:3px;width:23.5px;font-size:24px;line-height:30px;padding-left:6px">f:</i></span><span class="mb">Mass</span>/<span class="id">maxMass</span>, <span class="chip" style="width:45px"><i style="left:3.5px;width:38px;font-size:24px;line-height:30px;padding-left:8px">p:</i></span><span class="nm">2</span>);</div>
<div class="code" style="left:243px;top:1138.30px"><span class="id">speedFactor</span> = <span class="ty">Mathf</span>.<span class="fn">Max</span>(<span class="nm">0</span>, <span class="id">speedFactor</span>);<span class="cm">//<span style="font-size:27px">确保非负</span></span></div>
<svg class="i" style="left:188px;top:944px;width:13px;height:20px;stroke:#b9bfc9;stroke-width:1.5" viewBox="0 0 13 20"><path d="M6.5 1C7.5 5 2 7.5 1.5 12.5C1.2 16.5 3.8 19 6.5 19C9.5 19 12 16.5 11.5 12.5C11.2 10 9.5 8.5 9 6.5C8 9 7 10.5 6 10.5C7.5 7 7.5 3.5 6.5 1Z"/><path d="M5 15.5C5 13.5 7 12.5 8 11.5"/></svg>
<div class="t" style="left:209px;top:944.15px;font-size:20.5px;color:#8c8c8c;">经常调用</div>
<svg class="i" style="left:316px;top:947px;width:18px;height:17px;stroke:#a6a6a6;stroke-width:1.6" viewBox="0 0 18 17"><rect x="1" y="1" width="16" height="15.5"/><path d="M5 12.5L13 4.5M8 4.5H13V9.5"/></svg>
<div class="t" style="left:341px;top:944.15px;font-size:20.5px;color:#8c8c8c;">1 用法</div>
<svg class="i" style="left:542px;top:113px;width:122px;height:6px;stroke:#d2a13a;stroke-width:1.2" viewBox="0 0 122 6"><path d="M0 5 L3 1 L6 5 L9 1 L12 5 L15 1 L18 5 L21 1 L24 5 L27 1 L30 5 L33 1 L36 5 L39 1 L42 5 L45 1 L48 5 L51 1 L54 5 L57 1 L60 5 L63 1 L66 5 L69 1 L72 5 L75 1 L78 5 L81 1 L84 5 L87 1 L90 5 L93 1 L96 5 L99 1 L102 5 L105 1 L108 5 L111 1 L114 5 L117 1 L120 5"/></svg>
<div class="a" style="left:498px;top:195px;width:30px;height:1.3px;background:#c27a52;"></div>
<div class="a" style="left:723px;top:316px;width:180px;height:1.3px;background:#c27a52;"></div>
<div class="a" style="left:304px;top:479px;width:2px;height:2px;background:#4caf50;"></div>
<div class="a" style="left:308.6px;top:479px;width:2px;height:2px;background:#4caf50;"></div>
<div class="a" style="left:313.2px;top:479px;width:2px;height:2px;background:#4caf50;"></div>
<div class="a" style="left:317.8px;top:479px;width:2px;height:2px;background:#4caf50;"></div>
<div class="a" style="left:322.4px;top:479px;width:2px;height:2px;background:#4caf50;"></div>
<div class="a" style="left:327px;top:479px;width:2px;height:2px;background:#4caf50;"></div>
<div class="a" style="left:334px;top:1086px;width:2px;height:2px;background:#4caf50;"></div>
<div class="a" style="left:338.6px;top:1086px;width:2px;height:2px;background:#4caf50;"></div>
<div class="a" style="left:343.2px;top:1086px;width:2px;height:2px;background:#4caf50;"></div>
<div class="a" style="left:347.8px;top:1086px;width:2px;height:2px;background:#4caf50;"></div>
<div class="a" style="left:352.4px;top:1086px;width:2px;height:2px;background:#4caf50;"></div>
<div class="a" style="left:357px;top:1086px;width:2px;height:2px;background:#4caf50;"></div>
<svg class="i" style="left:768px;top:82px;width:14px;height:26px;stroke:#000;stroke-width:3.5;stroke-linecap:butt" viewBox="0 0 14 26"><path d="M1 1H13M7 1V25M1 25H13"/></svg>
<svg class="i" style="left:768px;top:82px;width:14px;height:26px;stroke:#fff;stroke-width:1.6;stroke-linecap:butt" viewBox="0 0 14 26"><path d="M1.5 1H12.5M7 1V25M1.5 25H12.5"/></svg>
<svg class="i" style="left:47px;top:690.5px;width:45px;height:42px;stroke:none" viewBox="0 0 45 42"><circle cx="21" cy="13.7" r="8.6" fill="#3a3a3a" stroke="#e8e8e8" stroke-width="2" stroke-dasharray="3.3 2.5"/><path d="M18.5 15.5L21 18.3L23.5 15.5M21 18.3V21.5" stroke="#e8e8e8" stroke-width="1.8"/><path d="M17 22.5V28C17 30.5 19 32 21 32C23 32 25 30.5 25 28V22.5" stroke="#e8e8e8" stroke-width="2.2"/><path d="M18 25.5L24 24.8M18 28.5L24 27.5" stroke="#1a1a1a" stroke-width="1.2"/><path d="M17.5 24.5H24.5V28C24.5 30 23 31.5 21 31.5C19 31.5 17.5 30 17.5 28Z" fill="#e8e8e8"/><path d="M18 26L24 25.2M18.5 29L23.8 28.2" stroke="#222" stroke-width="1.1"/></svg>
<div class="a" style="left:0px;top:81px;width:2007px;height:1px;background:#3a3a3a;"></div>
<svg class="i" style="left:1900px;top:10px;width:20px;height:19px;stroke:none" viewBox="0 0 20 19"><path d="M10 1L19 17.5H1Z" fill="#f2b33d" stroke="#f2b33d" stroke-width="1.5"/><path d="M10 6.5V12" stroke="#1f1f1f" stroke-width="2.2"/><circle cx="10" cy="14.8" r="1.2" fill="#1f1f1f" stroke="none"/></svg>
<div class="t" style="left:1924px;top:10.52px;font-size:19px;color:#d0d0d0;">5</div>
<svg class="i" style="left:1951px;top:16px;width:13px;height:8px;stroke:#c8c8c8;stroke-width:1.5" viewBox="0 0 13 8"><path d="M1 7L6.5 1.5L12 7"/></svg>
<svg class="i" style="left:1982px;top:16px;width:13px;height:8px;stroke:#c8c8c8;stroke-width:1.5" viewBox="0 0 13 8"><path d="M1 1L6.5 6.5L12 1"/></svg>
<div class="a" style="left:1993px;top:482px;width:12px;height:461px;background:#474747;border-radius:1px"></div>
<div class="a" style="left:1985px;top:38.5px;width:20px;height:3px;background:#f0b03c;"></div>
<div class="a" style="left:1985px;top:415.5px;width:20px;height:3px;background:#f0b03c;"></div>
<div class="a" style="left:1985px;top:509.5px;width:20px;height:3px;background:#f0b03c;"></div>
<div class="a" style="left:1985px;top:746px;width:20px;height:2px;background:#5f5f5f;"></div>
</div>
<div class="a" style="left:2499px;top:60px;width:61px;height:1265px;background:#2b2b2b;"></div>
<div class="a" style="left:2499px;top:60px;width:1px;height:1265px;background:#1e1e1e;"></div>
<svg class="i" style="left:2518px;top:78px;width:26px;height:28px;stroke:#e0e0e0;stroke-width:2" viewBox="0 0 26 28"><path d="M12.5 2.5C8 2.5 5.5 6 5.5 10V15.5L1.5 22H24.5L20.5 15.5V12"/><path d="M10 25H15"/></svg>
<div class="a" style="left:2534px;top:76px;width:12.5px;height:12.5px;background:#e8695a;border-radius:50%"></div>
<svg class="i" style="left:2518px;top:140px;width:28px;height:24px;stroke:#e0e0e0;stroke-width:2" viewBox="0 0 28 24"><path d="M1 12H8L12 2L17 22L21 12H27"/></svg>
<svg class="i" style="left:2500px;top:190px;width:60px;height:50px;stroke:#e0e0e0;stroke-width:2.1" viewBox="0 0 60 50"><path d="M21 32C16 24 19.5 11.5 31 11C36 11 40 13.5 42 18.5M27 29C23.5 25 24.5 18.5 29.5 18"/><path d="M32.5 23.5H44.5A1.5 1.5 0 0 1 46 25V41L43 36.5H34A1.5 1.5 0 0 1 32.5 35Z"/></svg>
<svg class="i" style="left:2517px;top:258px;width:28px;height:28px;stroke:#e0e0e0;stroke-width:2.1" viewBox="0 0 28 28"><path d="M14.25 1.2L19 6L14.25 10.8L9.5 6Z M6 8.9L10.8 13.7L6 18.5L1.2 13.7Z M22.6 8.9L27.4 13.7L22.6 18.5L17.8 13.7Z M14.25 16.5L19 21.3L14.25 26.1L9.5 21.3Z"/></svg>
<div class="a" style="left:2512px;top:309px;width:37px;height:1px;background:#3d3d3d;"></div>
<svg class="i" style="left:2518px;top:334px;width:25px;height:28px;stroke:#e0e0e0;stroke-width:2" viewBox="0 0 25 28"><ellipse cx="12.5" cy="5" rx="11" ry="4"/><path d="M1.5 5V23C1.5 25 6.5 27 12.5 27C18.5 27 23.5 25 23.5 23V5M1.5 11C1.5 13 6.5 15 12.5 15C18.5 15 23.5 13 23.5 11M1.5 17C1.5 19 6.5 21 12.5 21C18.5 21 23.5 19 23.5 17"/></svg>
<div class="a" style="left:0px;top:1325px;width:2560px;height:43px;background:#2b2b2b;"></div>
<div class="a" style="left:0px;top:1325px;width:2560px;height:1px;background:#1c1c1c;"></div>
<div class="t" style="left:21.75px;top:1337.25px;font-size:19.2px;color:#b9b9b9;letter-spacing:-0.258px;">BallBattle</div>
<div class="t" style="left:140.5px;top:1337.25px;font-size:19.2px;color:#b9b9b9;letter-spacing:-0.230px;">Assembly-CSharp</div>
<div class="t" style="left:329.5px;top:1337.25px;font-size:19.2px;color:#b9b9b9;letter-spacing:-0.924px;">Assets</div>
<div class="t" style="left:419.5px;top:1337.25px;font-size:19.2px;color:#b9b9b9;letter-spacing:-0.363px;">Scripts</div>
<div class="t" style="left:513.75px;top:1337.25px;font-size:19.2px;color:#b9b9b9;letter-spacing:-0.536px;">Player</div>
<div class="t" style="left:603.75px;top:1337.25px;font-size:19.2px;color:#b9b9b9;letter-spacing:-0.154px;">BallController.cs</div>
<div class="t" style="left:807.5px;top:1337.25px;font-size:19.2px;color:#b9b9b9;letter-spacing:0.076px;">BallController</div>
<div class="t" style="left:990px;top:1337.25px;font-size:19.2px;color:#b9b9b9;letter-spacing:-0.646px;">CheckCanEat</div>
<svg class="i" style="left:117.5px;top:1340px;width:9px;height:13px;stroke:#b0b0b0;stroke-width:1.5" viewBox="0 0 9 13"><path d="M1 1L7 6.5L1 12"/></svg>
<svg class="i" style="left:307px;top:1340px;width:9px;height:13px;stroke:#b0b0b0;stroke-width:1.5" viewBox="0 0 9 13"><path d="M1 1L7 6.5L1 12"/></svg>
<svg class="i" style="left:396px;top:1340px;width:9px;height:13px;stroke:#b0b0b0;stroke-width:1.5" viewBox="0 0 9 13"><path d="M1 1L7 6.5L1 12"/></svg>
<svg class="i" style="left:490.5px;top:1340px;width:9px;height:13px;stroke:#b0b0b0;stroke-width:1.5" viewBox="0 0 9 13"><path d="M1 1L7 6.5L1 12"/></svg>
<svg class="i" style="left:580px;top:1340px;width:9px;height:13px;stroke:#b0b0b0;stroke-width:1.5" viewBox="0 0 9 13"><path d="M1 1L7 6.5L1 12"/></svg>
<svg class="i" style="left:754.5px;top:1340px;width:9px;height:13px;stroke:#b0b0b0;stroke-width:1.5" viewBox="0 0 9 13"><path d="M1 1L7 6.5L1 12"/></svg>
<svg class="i" style="left:937.5px;top:1340px;width:9px;height:13px;stroke:#b0b0b0;stroke-width:1.5" viewBox="0 0 9 13"><path d="M1 1L7 6.5L1 12"/></svg>
<svg class="i" style="left:778px;top:1334px;width:21px;height:20px;stroke:#e0a648;stroke-width:1.6" viewBox="0 0 21 20"><path d="M2 4L6 1L10 5L6 8Z M10.5 10.5L14 8L18 12L14.5 15Z M6 8L10.5 10.5M12 12L9 15L12 18.5L15 16"/></svg>
<svg class="i" style="left:960px;top:1335px;width:22px;height:22px;stroke:#9d7fe0;stroke-width:1.6" viewBox="0 0 22 22"><path d="M11 1.5L20 5.5V15.5L11 20L2 15.5V5.5Z M2 5.5L11 10L20 5.5M11 10V20"/></svg>
<div class="a" style="left:960px;top:1349px;width:9px;height:8px;background:#e07f3c;border-radius:1px"></div>
<svg class="i" style="left:962px;top:1346px;width:5px;height:5px;stroke:#e07f3c;stroke-width:1.2" viewBox="0 0 5 5"><path d="M0.8 4V2.5A1.7 1.7 0 0 1 4.2 2.5V4"/></svg>
<div class="t" style="left:2049.5px;top:1337.42px;font-size:19px;color:#b9b9b9;letter-spacing:-0.159px;">56:32</div>
<div class="t" style="left:2121.7px;top:1337.42px;font-size:19px;color:#b9b9b9;letter-spacing:-2.000px;">CRLF</div>
<div class="t" style="left:2189.8px;top:1337.42px;font-size:19px;color:#b9b9b9;letter-spacing:-0.782px;">UTF-8</div>
<svg class="i" style="left:2266px;top:1337px;width:21px;height:21px;stroke:#d6d6d6;stroke-width:1.6" viewBox="0 0 21 21"><circle cx="10.5" cy="10.5" r="9.5"/><path d="M5.5 10.5L9 14L15.5 7"/></svg>
<svg class="i" style="left:2314px;top:1338px;width:21px;height:18px;stroke:#58a05e;stroke-width:1.6" viewBox="0 0 21 18"><path d="M1 1.5H20L10.5 17Z"/></svg>
<div class="t" style="left:2367px;top:1337.64px;font-size:18.5px;color:#b9b9b9;">4 个空格</div>
<svg class="i" style="left:2466px;top:1336px;width:21px;height:21px;stroke:#d6d6d6;stroke-width:1.6" viewBox="0 0 21 21"><rect x="1" y="9.5" width="14" height="10.5" rx="1.5"/><path d="M11 9.5V6A4.5 4.5 0 0 1 20 6V8M8 13V16"/></svg>
<svg class="i" style="left:2512px;top:1337px;width:20px;height:21px;stroke:#d6d6d6;stroke-width:1.6" viewBox="0 0 20 21"><path d="M10 1L19 3.5V10.5C19 15.5 15 19 10 20.5C5 19 1 15.5 1 10.5V3.5Z"/><path d="M10 5H15M10 8H15M10 11H15M10 14H14"/></svg>
<div class="a" style="left:0px;top:1368px;width:2560px;height:72px;background:linear-gradient(90deg,#dee0ee 0%,#e1e0ee 40%,#e0e2ef 70%,#e2e2f0 100%);"></div>
<div class="a" style="left:0px;top:1366px;width:2560px;height:2px;background:#1b1b1b;"></div>
<div class="a" style="left:0px;top:1368px;width:2560px;height:2px;background:#b9bac2;"></div>
<svg class="i" style="left:965.5px;top:1387.5px;width:35.5px;height:34.5px;stroke:none" viewBox="0 0 35.5 34.5"><defs><linearGradient id="wg" x1="0" y1="0" x2="1" y2="1"><stop offset="0" stop-color="#48c0f8"/><stop offset="1" stop-color="#0a6fd6"/></linearGradient></defs><rect x="0" y="0" width="16.8" height="16.3" rx="1.5" fill="url(#wg)"/><rect x="18.7" y="0" width="16.8" height="16.3" rx="1.5" fill="url(#wg)"/><rect x="0" y="18.2" width="16.8" height="16.3" rx="1.5" fill="url(#wg)"/><rect x="18.7" y="18.2" width="16.8" height="16.3" rx="1.5" fill="url(#wg)"/></svg>
<svg class="i" style="left:1025px;top:1380px;width:50px;height:48px;stroke:none" viewBox="0 0 50 48"><defs><linearGradient id="cp1" x1="0" y1="1" x2="0.5" y2="0"><stop offset="0" stop-color="#e8c020"/><stop offset="0.45" stop-color="#4cae6a"/><stop offset="1" stop-color="#1a90e8"/></linearGradient><linearGradient id="cp2" x1="0" y1="1" x2="1" y2="0"><stop offset="0" stop-color="#ff7a6a"/><stop offset="0.5" stop-color="#e05cc0"/><stop offset="1" stop-color="#8f5ee0"/></linearGradient></defs><path d="M12.5 10.5Q13.5 8.8 16 8.8H29.5Q31.5 8.8 32.5 11L34 15.5L25.5 17L21.5 27.5Q20.8 29.5 18.5 29.5H10.5Q8 29.5 8.5 26.5Z" fill="url(#cp1)"/><path d="M29 8.8Q31.5 8.8 32.5 11L34 15.5L25.5 17Z" fill="#1f4fc8"/><path d="M27 17.3H39.5Q42 17.3 41.3 20L38.3 29Q37.6 30.8 35.5 30.8H23L26.3 18.8Q26.6 17.3 27 17.3Z" fill="url(#cp2)"/><rect x="15.5" y="30.5" width="27" height="10.5" rx="2" fill="#f7c325"/><text x="20.5" y="40" font-family="Liberation Sans" font-weight="bold" font-size="10.5" letter-spacing="0.8" fill="#2a160a" stroke="none">PRE</text></svg>
<svg class="i" style="left:1097.5px;top:1387.5px;width:37px;height:33px;stroke:none" viewBox="0 0 37 33"><rect x="9" y="0" width="27" height="23" rx="2" fill="#f4f4f6" stroke="#dcdce2" stroke-width="0.8"/><rect x="0" y="9" width="27" height="23.5" rx="2" fill="#232323"/><rect x="9" y="9" width="18" height="14" fill="#bfbfbf"/></svg>
<svg class="i" style="left:1164px;top:1386px;width:36px;height:36px;stroke:none" viewBox="0 0 36 36"><rect x="0" y="0" width="36" height="36" rx="7" fill="#ffffff"/><circle cx="18" cy="18" r="12.5" fill="#2aa1f0"/><path d="M6 17C7 9 13 5.5 19 5.5C23 5.5 26.5 7.5 28.5 10.5C25 9 21 10 19 13C16 17 10 19 6 17Z" fill="#1746c9"/><path d="M22 14C23 11 25 10 27 10.5C26.5 13 24.5 14.5 22 14Z" fill="#fff"/><path d="M6.5 20C12 22 20 21 30 17C29 25 23.5 30.5 18 30.5C12 30.5 7.5 26 6.5 20Z" fill="#1d8fe6"/></svg>
<svg class="i" style="left:1229.5px;top:1387.5px;width:36.5px;height:33px;stroke:none" viewBox="0 0 36.5 33"><path d="M0 3C0 1.5 1 0.5 2.5 0.5H11L14 4H34C35.5 4 36.5 5 36.5 6.5V8H0Z" fill="#e8a317"/><rect x="0" y="6" width="36.5" height="27" rx="1.5" fill="#fcd14e"/><rect x="6.5" y="22" width="23.5" height="11" rx="3" fill="#1a7fdc"/><rect x="11" y="25" width="14.5" height="2.5" rx="1" fill="#0d4f9a"/></svg>
<svg class="i" style="left:1290px;top:1380px;width:50px;height:48px;stroke:none" viewBox="0 0 50 48"><defs><linearGradient id="eg1" x1="0" y1="0" x2="1" y2="0.6"><stop offset="0" stop-color="#30b8f0"/><stop offset="0.55" stop-color="#2ec0a8"/><stop offset="1" stop-color="#5fd650"/></linearGradient><linearGradient id="eg2" x1="0" y1="0" x2="0.7" y2="1"><stop offset="0" stop-color="#1780e8"/><stop offset="1" stop-color="#0d4fa8"/></linearGradient></defs><path d="M6.5 22C8 12 15 6 24 6C34 6 42 13 42 21C42 26 39 29.5 33.5 29.5C29.5 29.5 27 28 27.5 26C28.5 23 27 19 22.5 19C15 19 9 20 6.5 22Z" fill="url(#eg1)"/><path d="M6.5 21.5C9 19 15 15.5 21.5 16C26 16.5 28 19.5 27.5 21.5C22 20 18.5 24 19.5 28C21 33 27 35.5 33 34C35 33.5 37.5 33 39 32.5C35.5 38 29.5 42 23 42C13 42 6 34 6 24Z" fill="url(#eg2)"/><ellipse cx="23.5" cy="24.5" rx="4.3" ry="4.8" fill="#e2e1ef"/></svg>
<svg class="i" style="left:1364.5px;top:1386px;width:31px;height:35px;stroke:none" viewBox="0 0 31 35"><path d="M15.5 0.5L30.5 9V26L15.5 34.5L0.5 26V9Z" fill="#5c5c5c"/><path d="M15.5 0.5L30.5 9V26L15.5 34.5Z" fill="#1e1e1e"/><g transform="translate(15.5 17.5) scale(0.92) translate(-1043.4 -306.2)"><path d="M1043.4 294.3L1054 299.5V310L1043.5 318L1032.9 310V299.5Z" fill="#f2f2f2"/><path d="M1042.2 293.5H1044.6V300.3L1047.7 300.5L1043.4 303.7L1039.3 300.5L1042.2 300.3Z" fill="#3a3a3a"/><path d="M1036.7 305L1041.3 307.8V312.3L1034.5 311.3Z M1050.1 305L1045.5 307.8V312.3L1052.3 311.3Z" fill="#3a3a3a"/></g></svg>
<svg class="i" style="left:1428px;top:1386px;width:36px;height:35px;stroke:none" viewBox="0 0 36 35"><path d="M20 4L32 0.5V23L20 26Z" fill="#e8f8ea" stroke="#8fd49a" stroke-width="1"/><path d="M16 8L28 5V27L16 30Z" fill="#e8f8ea" stroke="#8fd49a" stroke-width="1"/><path d="M0.5 12.5L27 8V32L3 35L1 33Z" fill="#f7f7f7" stroke="#555" stroke-width="1.3"/><text x="3.5" y="20" font-family="Liberation Sans" font-weight="bold" font-size="6.5" fill="#555" stroke="none" transform="rotate(-6 3 20)">space</text><text x="5" y="28" font-family="Liberation Sans" font-weight="bold" font-size="6.5" fill="#3aa85a" stroke="none" transform="rotate(-6 3 28)">desk</text></svg>
<svg class="i" style="left:1495px;top:1386.5px;width:34px;height:34px;stroke:none" viewBox="0 0 34 34"><circle cx="17" cy="17" r="16.5" fill="#000"/><circle cx="17" cy="17" r="14.5" fill="#000" stroke="#fff" stroke-width="1.8"/><circle cx="17" cy="17" r="9" fill="#e8392a"/></svg>
<svg class="i" style="left:1560px;top:1385px;width:36px;height:37px;stroke:none" viewBox="0 0 36 37"><path d="M2 10C2 8 3 7 5 7H14V35H4C2.5 35 1 34 1 32Z" fill="#fe315d"/><path d="M3 4H14V12H3Z" fill="#087cfa"/><path d="M15 0.5H32C34 0.5 34.5 2 34.5 4V23H15Z" fill="#fdb60d"/><path d="M26 18H35V32C35 33 34 33.5 33 33.5H26Z" fill="#087cfa"/><rect x="7" y="7" width="22.5" height="22.5" fill="#000"/><text x="9.5" y="18" font-family="Liberation Sans" font-weight="bold" font-size="10" fill="#fff" stroke="none">RD</text><rect x="9.5" y="25" width="9" height="1.8" fill="#fff"/></svg>
<div class="a" style="left:1376px;top:1428px;width:9px;height:4px;background:#7d7e88;border-radius:2px"></div>
<div class="a" style="left:1441.5px;top:1428px;width:9px;height:4px;background:#7d7e88;border-radius:2px"></div>
<div class="a" style="left:1507.5px;top:1428px;width:9px;height:4px;background:#7d7e88;border-radius:2px"></div>
<div class="a" style="left:1573.5px;top:1428px;width:9px;height:4px;background:#7d7e88;border-radius:2px"></div>
<svg class="i" style="left:2120.5px;top:1399px;width:18px;height:10px;stroke:#222;stroke-width:1.6" viewBox="0 0 18 10"><path d="M1 9L9 1.5L17 9"/></svg>
<svg class="i" style="left:2164.5px;top:1395px;width:25px;height:17px;stroke:#222;stroke-width:1.4" viewBox="0 0 25 17"><rect x="1" y="1" width="23" height="15" rx="2.5"/><path d="M5 5.5H6M9 5.5H10M13 5.5H14M17 5.5H18M6.5 8.5H7.5M10.5 8.5H11.5M14.5 8.5H15.5M7 12H18"/></svg>
<div class="t" style="left:2214px;top:1393.72px;font-size:21px;color:#1e1e1e;">中</div>
<div class="t" style="left:2270.5px;top:1393.72px;font-size:21px;color:#1e1e1e;">拼</div>
<svg class="i" style="left:2327px;top:1395px;width:24px;height:18px;stroke:#222;stroke-width:1.5" viewBox="0 0 24 18"><path d="M2 7C8 1 16 1 22 7" stroke="#b5b5bd"/><path d="M5.5 10.5C9.5 6.5 14.5 6.5 18.5 10.5M9 14C11 12 13 12 15 14"/><circle cx="12" cy="16.5" r="1.4" fill="#222" stroke="none"/></svg>
<svg class="i" style="left:2362px;top:1395px;width:26px;height:18px;stroke:#222;stroke-width:1.5" viewBox="0 0 26 18"><path d="M1.5 6H5.5L11 1.5V16.5L5.5 12H1.5Z"/><path d="M14.5 5.5C16 7.5 16 10.5 14.5 12.5M17.5 3C20.5 6.5 20.5 11.5 17.5 15"/><path d="M20.5 1C24.5 5.5 24.5 12.5 20.5 17" stroke="#b5b5bd"/></svg>
<div class="t" style="left:2452px;top:1383.16px;font-size:17.3px;color:#1e1e1e;">19:00</div>
<div class="t" style="left:2412.7px;top:1407.47px;font-size:18.7px;color:#1e1e1e;">2025/11/2</div>
<svg class="i" style="left:2507px;top:1392px;width:23px;height:25px;stroke:none" viewBox="0 0 23 25"><path d="M9.5 4C5 4.5 2.5 8 2.5 12V16.5L1 19.5H19L17.5 16.5V14" fill="#1e1e1e" stroke="#1e1e1e"/><path d="M2.5 12C2.5 8 5 4.5 9.5 4H13V14H17.5V16.5L19 19.5H1L2.5 16.5Z" fill="#1e1e1e"/><path d="M7.5 22H12.5" stroke="#1e1e1e" stroke-width="2"/><path d="M6 9H11L6 15H11" stroke="#e2e1ef" stroke-width="1.5"/><path d="M14 1H19L14 6.5H19" stroke="#1e1e1e" stroke-width="1.5"/></svg>
</body></html>
